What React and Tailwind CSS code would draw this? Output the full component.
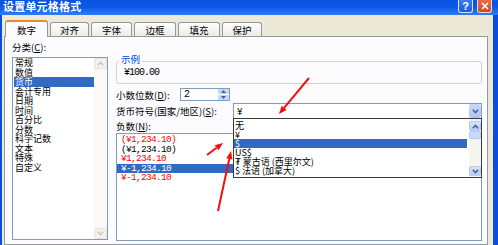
import React from "react";

const mono = "font-['Liberation_Mono',monospace]";

function Chevron({ up = false, color = "#4D6185" }) {
  return (
    <svg width="7" height="5" viewBox="0 0 7 5">
      <path
        d={up ? "M0.8 4.2 L3.5 1.4 L6.2 4.2" : "M0.8 0.8 L3.5 3.6 L6.2 0.8"}
        fill="none"
        stroke={color}
        strokeWidth="1.5"
      />
    </svg>
  );
}

function Arrow({ x1, y1, x2, y2 }) {
  const dx = x2 - x1;
  const dy = y2 - y1;
  const len = Math.hypot(dx, dy);
  const ux = dx / len;
  const uy = dy / len;
  const hl = 8;
  const hw = 3.2;
  const bx = x2 - ux * hl;
  const by = y2 - uy * hl;
  const pts = `${x2},${y2} ${bx - uy * hw},${by + ux * hw} ${bx + uy * hw},${by - ux * hw}`;
  return (
    <g>
      <line x1={x1} y1={y1} x2={bx} y2={by} stroke="#F01010" strokeWidth="2" />
      <polygon points={pts} fill="#F01010" />
    </g>
  );
}

const tabs = [
  ["数字", 43, true],
  ["对齐", 39],
  ["字体", 41],
  ["边框", 42],
  ["填充", 42],
  ["保护", 40],
];

const cats = ["常规", "数值", "货币", "会计专用", "日期", "时间", "百分比", "分数", "科学记数", "文本", "特殊", "自定义"];

const negs = [
  ["(¥1,234.10)", "red"],
  ["(¥1,234.10)", "black"],
  ["¥1,234.10", "red"],
  ["¥-1,234.10", "sel"],
  ["¥-1,234.10", "red"],
];

const symbols = ["无", "¥", "$", "US$", "₮ 蒙古语 (西里尔文)", "$ 法语 (加拿大)"];

export default function App() {
  return (
    <div className="relative w-[498px] h-[245px] overflow-hidden bg-[#0B4CDD] flex flex-col font-['Noto_Sans_CJK_SC','DejaVu_Sans',sans-serif] text-black">
      {/* title bar */}
      <div className="h-[15px] flex justify-between bg-gradient-to-b from-[#0853E0] via-[#0A5AE6] to-[#2F7DF5]">
        <span className="ml-[3px] text-[11px] leading-[12px] font-bold text-white tracking-[0.2px]">
          设置单元格格式
        </span>
        <div className="flex gap-[4px] mr-[6px]">
          <div className="w-[15px] h-[13px] rounded-b-[3px] border border-t-0 border-[#DCE6FA] bg-gradient-to-b from-[#3C79EE] to-[#1F5BDC] flex items-center justify-center text-white text-[11px] leading-[11px] font-bold font-['Liberation_Sans',sans-serif]">
            ?
          </div>
          <div className="w-[15px] h-[13px] rounded-b-[3px] border border-t-0 border-[#F3D6CC] bg-gradient-to-b from-[#E96B43] to-[#D4481F] flex items-center justify-center">
            <svg width="8" height="8" viewBox="0 0 8 8">
              <path d="M1 1 L7 7 M7 1 L1 7" stroke="white" strokeWidth="1.6" />
            </svg>
          </div>
        </div>
      </div>

      {/* body */}
      <div className="flex-1 ml-[2px] mr-[5px] bg-[#ECE9D8] flex flex-col">
        {/* tabs */}
        <div className="h-[21px] flex items-end gap-[2px] pl-[3px]">
          {tabs.map(([t, w, active]) => (
            <div
              key={t}
              style={{ width: w }}
              className={
                active
                  ? "relative z-10 h-[17px] -mb-px bg-[#FCFCFE] border border-b-0 border-[#919B9C] border-t-2 border-t-[#E68B2C] rounded-t-[3px] flex items-center justify-center text-[9.5px] leading-[10px]"
                  : "h-[14px] bg-gradient-to-b from-white to-[#ECEBE4] border border-b-0 border-[#919B9C] rounded-t-[3px] flex items-center justify-center text-[9.5px] leading-[10px]"
              }
            >
              {t}
            </div>
          ))}
        </div>

        {/* panel */}
        <div className="ml-[2px] w-[484px] flex-1 border border-[#919B9C] bg-[#FCFCFE] flex gap-[8px] pl-[7px] pt-[4px]">
          {/* left column */}
          <div className="w-[96px] flex flex-col">
            <div className="h-[16px] text-[9.5px] leading-[12px]">
              分类(<span className="underline">C</span>):
            </div>
            <div className="h-[183px] border border-[#7F9DB9] bg-white flex">
              <div className="flex-1 flex flex-col">
                {cats.map((c) => (
                  <div
                    key={c}
                    className={
                      c === "货币"
                        ? "ml-[1px] pl-[1px] h-[9.5px] text-[9px] leading-[9.5px] bg-[#316AC5] text-white"
                        : "ml-[1px] pl-[1px] h-[9.5px] text-[9px] leading-[9.5px]"
                    }
                  >
                    {c}
                  </div>
                ))}
              </div>
              <div className="w-[13px] bg-[#FAF9F5] flex flex-col justify-between">
                <div className="h-[11px] rounded-[2px] border border-[#E6E4DB] bg-[#F3F1EB] flex items-center justify-center">
                  <Chevron up color="#C9C7BD" />
                </div>
                <div className="h-[11px] rounded-[2px] border border-[#E6E4DB] bg-[#F3F1EB] flex items-center justify-center">
                  <Chevron color="#C9C7BD" />
                </div>
              </div>
            </div>
          </div>

          {/* right column */}
          <div className="w-[366px] flex flex-col">
            <div className="relative mt-[20px] h-[23px] border border-[#D5D3C6] rounded-[3px]">
              <span className="absolute left-[2px] -top-[8px] px-[2px] bg-[#FCFCFE] text-[#0046D5] text-[9.5px] leading-[10px]">
                示例
              </span>
              <div className={`pl-[7px] pt-[6px] text-[10px] leading-[10px] tracking-[-1px] ${mono}`}>¥100.00</div>
            </div>

            <div className="mt-[4px] h-[13px] flex items-center">
              <div className="w-[64px] text-[9.5px] leading-[12px]">
                小数位数(<span className="underline">D</span>):
              </div>
              <div className="w-[50px] h-[13px] border border-[#7F9DB9] bg-white flex">
                <div className={`flex-1 pl-[3px] text-[10px] leading-[11px] ${mono}`}>2</div>
                <div className="w-[11px] flex flex-col gap-px">
                  <div className="flex-1 rounded-[1px] bg-[#C6D6FA] flex items-center justify-center">
                    <svg width="5" height="3" viewBox="0 0 5 3">
                      <path d="M0 3 L2.5 0 L5 3Z" fill="#4D6185" />
                    </svg>
                  </div>
                  <div className="flex-1 rounded-[1px] bg-[#C6D6FA] flex items-center justify-center">
                    <svg width="5" height="3" viewBox="0 0 5 3">
                      <path d="M0 0 L2.5 3 L5 0Z" fill="#4D6185" />
                    </svg>
                  </div>
                </div>
              </div>
            </div>

            <div className="mt-[2px] h-[16px] flex items-center">
              <div className="w-[117px] text-[9.5px] leading-[12px] whitespace-nowrap">
                货币符号(国家/地区)(<span className="underline">S</span>):
              </div>
              <div className="w-[249px] h-[16px] border border-[#7F9DB9] bg-white flex items-center">
                <div className="flex-1 pl-[3px] text-[10px] leading-[12px]">¥</div>
                <div className="w-[12px] h-[14px] rounded-[2px] bg-gradient-to-b from-[#C8D8FC] to-[#AFC5F5] flex items-center justify-center">
                  <Chevron />
                </div>
              </div>
            </div>

            <div className="h-[14px] text-[9.5px] leading-[14px]">
              负数(<span className="underline">N</span>):
            </div>
            <div className="h-[108px] border border-[#7F9DB9] bg-white pt-px flex flex-col">
              {negs.map(([t, k], i) => (
                <div
                  key={i}
                  className={
                    k === "sel"
                      ? `h-[9.5px] pl-[4px] text-[9.5px] leading-[9.5px] tracking-[-0.7px] bg-[#316AC5] text-white ${mono}`
                      : k === "red"
                      ? `h-[9.5px] pl-[4px] text-[9.5px] leading-[9.5px] tracking-[-0.7px] text-[#FF0000] ${mono}`
                      : `h-[9.5px] pl-[4px] text-[9.5px] leading-[9.5px] tracking-[-0.7px] text-black ${mono}`
                  }
                >
                  {t}
                </div>
              ))}
            </div>
          </div>
        </div>
      </div>

      {/* dropdown list */}
      <div className="absolute left-[233px] top-[118px] w-[249px] h-[60px] border border-[#3B3B3B] bg-white flex">
        <div className="flex-1 pt-[2px] flex flex-col">
          {symbols.map((s) => (
            <div
              key={s}
              className={
                s === "$"
                  ? "h-[9px] mr-[2px] pl-[1px] text-[9px] leading-[9px] bg-[#316AC5] text-white whitespace-nowrap"
                  : "h-[9px] pl-[1px] text-[9px] leading-[9px] whitespace-nowrap"
              }
            >
              {s}
            </div>
          ))}
        </div>
        <div className="w-[12px] bg-[#F5F4EF] pt-[2px] pb-[1px] flex flex-col">
          <div className="h-[10px] rounded-[2px] border border-[#B7CAF5] bg-gradient-to-b from-[#D7E3FD] to-[#B9CDF8] flex items-center justify-center">
            <Chevron up />
          </div>
          <div className="h-[8px] rounded-[2px] border border-[#B7CAF5] bg-[#C9D8FB]" />
          <div className="flex-1" />
          <div className="h-[10px] rounded-[2px] border border-[#B7CAF5] bg-gradient-to-b from-[#D7E3FD] to-[#B9CDF8] flex items-center justify-center">
            <Chevron />
          </div>
        </div>
      </div>

      {/* red annotation arrows */}
      <svg className="absolute left-0 top-0 pointer-events-none" width="498" height="245" viewBox="0 0 498 245">
        <Arrow x1={309} y1={78} x2={279} y2={114} />
        <Arrow x1={207} y1={155} x2={223} y2={143} />
        <Arrow x1={218} y1={211} x2={231} y2={151} />
      </svg>
    </div>
  );
}
